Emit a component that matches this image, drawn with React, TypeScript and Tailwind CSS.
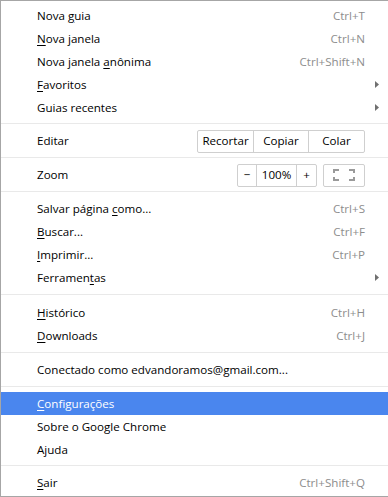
import React from 'react';

type ItemProps = {
  label: React.ReactNode;
  shortcut?: string;
  arrow?: boolean;
  active?: boolean;
};

const U = ({ children }: { children: React.ReactNode }) => (
  <span className="underline underline-offset-[2px] decoration-1">{children}</span>
);

const Arrow = () => (
  <svg width="4" height="7" viewBox="0 0 4 7">
    <path d="M0 0 L4 3.5 L0 7 Z" fill="#707070" />
  </svg>
);

const Item = ({ label, shortcut, arrow, active }: ItemProps) => (
  <div
    className={`h-[23px] flex items-center pl-[36px] pr-[9px] ${
      active ? 'bg-[#4a86ee] text-white' : 'text-black'
    }`}
  >
    <span className="flex-1 whitespace-nowrap">{label}</span>
    {shortcut && <span className={active ? 'text-white' : 'text-[#8d8d8d]'}>{shortcut}</span>}
    <span className="w-[14px] flex justify-end">{arrow && <Arrow />}</span>
  </div>
);

const Sep = ({ className = 'mt-[4px] mb-[5px]' }: { className?: string }) => (
  <div className={`h-px bg-[#e9e9e9] ${className}`} />
);

const FullscreenIcon = () => (
  <svg width="22" height="12" viewBox="0 0 22 12" fill="none" stroke="#9a9a9a" strokeWidth="2">
    <path d="M1 4 V1 H6" />
    <path d="M16 1 H21 V4" />
    <path d="M1 8 V11 H6" />
    <path d="M16 11 H21 V8" />
  </svg>
);

export default function App() {
  return (
    <div
      className="w-[388px] h-[497px] bg-white border-l border-t border-b border-[#a6a6a6] pt-[3px] text-[11.6px] leading-none overflow-hidden"
      style={{ fontFamily: '"Open Sans", "Noto Sans", Arial, sans-serif' }}
    >
      <Item label={<>Nova <U>g</U>uia</>} shortcut="Ctrl+T" />
      <Item label={<><U>N</U>ova janela</>} shortcut="Ctrl+N" />
      <Item label={<>Nova janela <U>a</U>nônima</>} shortcut="Ctrl+Shift+N" />
      <Item label={<><U>F</U>avoritos</>} arrow />
      <Item label="Guias recentes" arrow />
      <Sep />
      <div className="h-[24px] flex items-center pl-[36px] pr-[23px]">
        <span className="flex-1">Editar</span>
        <div className="flex h-[23px] border border-[#cfcfcf] rounded-[2px]">
          <div className="w-[56px] flex items-center justify-center border-r border-[#cfcfcf]">Recortar</div>
          <div className="w-[55px] flex items-center justify-center border-r border-[#cfcfcf]">Copiar</div>
          <div className="w-[55px] flex items-center justify-center">Colar</div>
        </div>
      </div>
      <Sep />
      <div className="h-[24px] flex items-center pl-[36px] pr-[23px]">
        <span className="flex-1">Zoom</span>
        <div className="flex h-[23px] border border-[#cfcfcf] rounded-[2px]">
          <div className="w-[19px] flex items-center justify-center border-r border-[#cfcfcf]">−</div>
          <div className="w-[40px] flex items-center justify-center border-r border-[#cfcfcf]">100%</div>
          <div className="w-[19px] flex items-center justify-center">+</div>
        </div>
        <div className="ml-[6px] w-[42px] h-[23px] flex items-center justify-center border border-[#cfcfcf] rounded-[2px]">
          <FullscreenIcon />
        </div>
      </div>
      <Sep />
      <Item label={<>Salvar página <U>c</U>omo...</>} shortcut="Ctrl+S" />
      <Item label={<><U>B</U>uscar...</>} shortcut="Ctrl+F" />
      <Item label={<><U>I</U>mprimir...</>} shortcut="Ctrl+P" />
      <Item label={<>Ferramen<U>t</U>as</>} arrow />
      <Sep className="mt-[5px] mb-[6px]" />
      <Item label={<><U>H</U>istórico</>} shortcut="Ctrl+H" />
      <Item label={<><U>D</U>ownloads</>} shortcut="Ctrl+J" />
      <Sep className="mt-[5px] mb-[5px]" />
      <Item label="Conectado como edvandoramos@gmail.com..." />
      <Sep className="mt-[5px] mb-[5px]" />
      <Item label={<><U>C</U>onfigurações</>} active />
      <Item label="Sobre o Google Chrome" />
      <Item label="Ajuda" />
      <Sep />
      <Item label={<><U>S</U>air</>} shortcut="Ctrl+Shift+Q" />
    </div>
  );
}
